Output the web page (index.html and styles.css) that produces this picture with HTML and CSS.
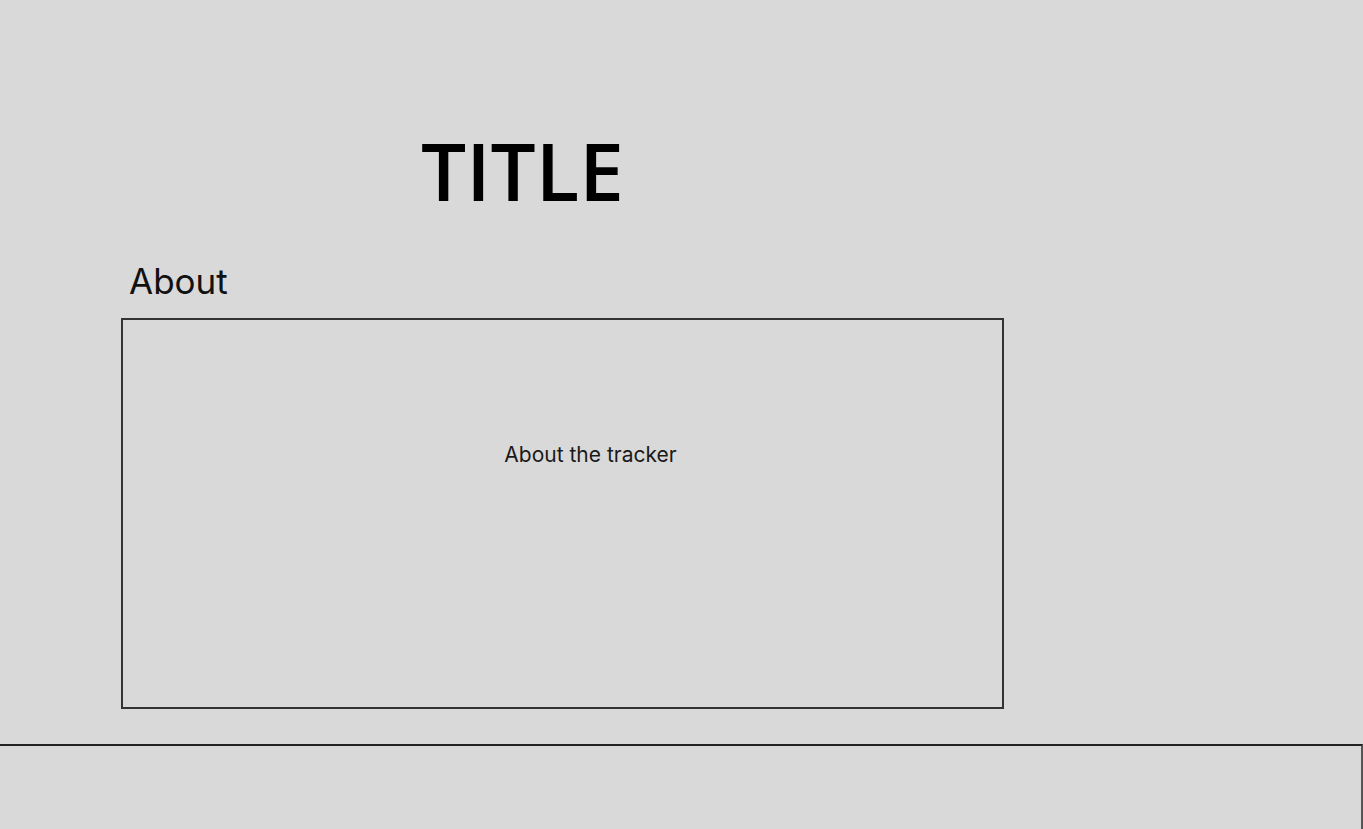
FILE: index.html
```html
<!DOCTYPE html>
<html lang="en">

<head>
    <meta charset="UTF-8">
    <meta name="viewport" content="width=device-width, initial-scale=1.0">
    <title>Tracker</title>
    <link rel="stylesheet" href="styles.css">
</head>

<body>
    <!-- header -->
    <div class="head">
        <h1 class="title">TITLE</h1>
    </div>

    <!-- about section -->
    <div class="about">
        <h2 class="about-head">About</h2>
        <div class="about-box">
            <p class="about-text">About the tracker</p>
        </div>
    </div>

    <!-- footer -->
    <div class="foot"></div>
</body>

</html>
```

FILE: styles.css
```css
/* tracker page */
html,
body {
    margin: 0;
    padding: 0;
    background-color: #d9d9d9;
    height: 100%;
    overflow: hidden;
}

body {
    font-family: Inter, "Noto Sans", sans-serif;
    color: #111;
}

.head {
    padding-top: 120px;
    padding-left: 421px;
    height: 137px;
}

.title {
    margin: 0;
    font-family: "Open Sans", sans-serif;
    font-weight: 600;
    font-size: 80px;
    line-height: 100px;
    color: #000;
}

.about {
    padding-left: 121px;
}

.about-head {
    margin: 0;
    padding-left: 8px;
    font-size: 35px;
    font-weight: 400;
    line-height: 48px;
    height: 61px;
}

.about-box {
    width: 883px;
    height: 391px;
    border: 2px solid #333;
    box-sizing: border-box;
    display: flex;
    justify-content: center;
}

.about-text {
    margin: 0;
    margin-top: 122px;
    margin-left: 56px;
    font-size: 21px;
    color: #1a1a1a;
}

.foot {
    margin-top: 35px;
    height: 120px;
    border-top: 2px solid #222;
    border-right: 2px solid #555;
    box-sizing: border-box;
}
```
